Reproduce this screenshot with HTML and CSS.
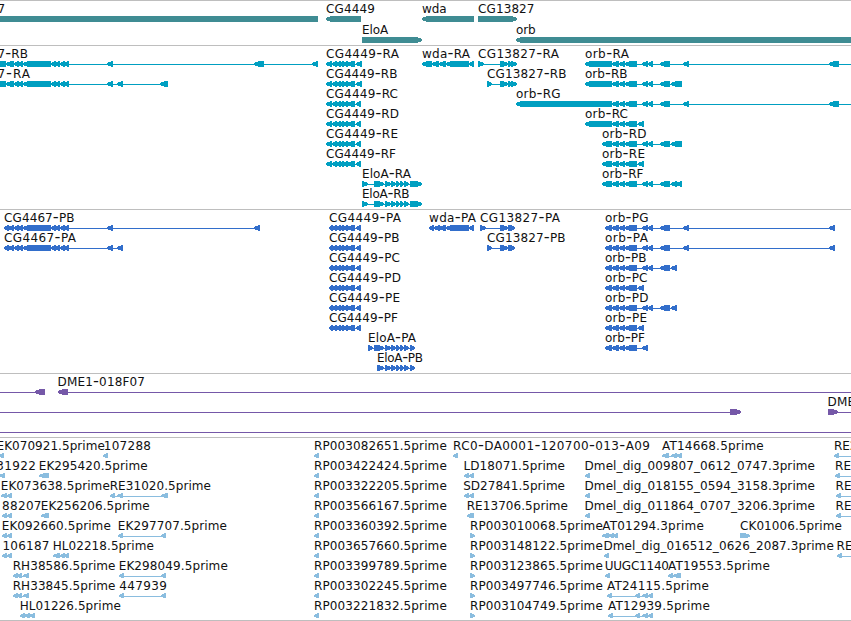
FILE: index.html
```
<!DOCTYPE html>
<html lang="en">
<head>
<meta charset="utf-8">
<title>Genome browser</title>
<link rel="stylesheet" href="styles.css">
</head>
<body>
<main class="browser" id="browser"></main>
<script src="tracks.js"></script>
</body>
</html>
```
FILE: styles.css
```
body {
  margin: 0;
  background: #fff;
}

.browser {
  display: flex;
  flex-direction: column;
  width: 851px;
  height: 620px;
  overflow: hidden;
  border-bottom: 1px solid #bebebe;
}

.track {
  box-sizing: border-box;
  flex: none;
  border-top: 1px solid #bebebe;
}

.track-genes { height: 45px; color: #3f8c93; }
.track-transcripts { height: 164px; color: #009fc1; }
.track-proteins { height: 164px; color: #326ecb; }
.track-clones { height: 64px; color: #7558a8; }
.track-ests { height: 183px; color: #8abddf; }

.row {
  display: block;
  width: 851px;
  height: 20px;
  overflow: visible;
}

.track-genes .row { height: 21px; }

.feature {
  fill: currentColor;
  shape-rendering: crispEdges;
}

.label {
  fill: #111;
  font: 12px "DejaVu Sans", sans-serif;
}

.hyphen { font-size: 16.5px; }
```
FILE: tracks.js
```
// Each feature: [label, labelStart, labelEnd, strand, exons, lineStart, lineEnd].
// Exons are "start-end" pairs in canvas pixels, separated by blanks.
const CG67 = "14-19 18-23 23-51 51-56 55-60 60-65 64-69 107-113";
const CG49R = "326-332 332-337 336-341 340-344 343-348 347-355 356-";
const CG49P = "329-333 332-337 336-341 340-344 343-348 347-355 356-361";
const ELO = "374-384 385-391 391-396 396-400 400-404 404-409";
const ORB = "612-619 619-625 625-637";
const ORB2 = ORB + " 642-648 648-653 660-670";

const rp = n => ["RP" + n + ".5prime", 314, 446.8, "-", "314-319"];
const rpR = n => ["RP" + n + ".5prime", 470, 602.8, "+", "470-475"];

const tracks = [
  { kind: "genes", rows: [
    [["7", -2.5, 5.5, "-", "-20-318"],
     ["CG4449", 326, 375, "-", "326-361"],
     ["wda", 422, 446.5, "-", "422-474"],
     ["CG13827", 478, 534.5, "+", "478-517"]],
    [["EloA", 362, 388.3, "+", "362-422"],
     ["orb", 516, 535.5, "-", "516-870"]]
  ]},
  { kind: "transcripts", rows: [
    [["7-RB", -2.5, 28, "-", "-10-6 6-14 " + CG67 + " 254-264 312-318"],
     ["CG4449-RA", 326, 399, "-", CG49R + "362"],
     ["wda-RA", 422, 470, "-", "422-432 432-439 439-446 446-469 469-474"],
     ["CG13827-RA", 478, 559, "+", "478-484 500-508 508-512 511-517"],
     ["orb-RA", 585, 629, "-", "585-612 " + ORB2 + " 683-689 829-839", 585, 851]],
    [["7-RA", -2.5, 30, "-", "-10-6 6-14 " + CG67 + " 117-123 160-168"],
     ["CG4449-RB", 326, 397.5, "-", CG49R + "362"],
     ["CG13827-RB", 487, 566.5, "+", "487-492 500-508 508-512 511-517"],
     ["orb-RB", 585, 627.5, "-", "585-612 " + ORB2 + " 671-682"]],
    [["CG4449-RC", 326, 398, "-", CG49R + "361"],
     ["orb-RG", 516, 560.5, "-", "516-612 " + ORB2 + " 683-689 829-839", 516, 851]],
    [["CG4449-RD", 326, 399, "-", CG49R + "361"],
     ["orb-RC", 585, 628, "-", "585-612 " + ORB + " 638-644"]],
    [["CG4449-RE", 326, 398, "-", CG49R + "361"],
     ["orb-RD", 602, 646.5, "-", "602-612 " + ORB2 + " 671-682"]],
    [["CG4449-RF", 326, 396, "-", CG49R + "361"],
     ["orb-RE", 602, 645, "-", "602-612 " + ORB + " 638-644"]],
    [["EloA-RA", 362, 411, "+", "362-368 " + ELO + " 410-422"],
     ["orb-RF", 602, 643.5, "-", "602-612 " + ORB2 + " 671-677 676-682"]],
    [["EloA-RB", 362, 409.5, "+", "362-368 " + ELO + " 410-422"]]
  ]},
  { kind: "proteins", rows: [
    [["CG4467-PB", 4, 74.5, "-", "4-9 8-14 " + CG67 + " 254-260"],
     ["CG4449-PA", 329, 401, "-", CG49P],
     ["wda-PA", 429, 476, "-", "429-434 434-440 439-446 446-469 469-474"],
     ["CG13827-PA", 480, 560, "+", "480-486 500-508 508-512 510-515"],
     ["orb-PG", 605, 648.5, "-", "605-612 " + ORB2 + " 683-689 829-835"]],
    [["CG4467-PA", 4, 76, "-", "4-9 8-14 " + CG67 + " 117-123"],
     ["CG4449-PB", 329, 399.5, "-", CG49P],
     ["CG13827-PB", 487, 565.5, "+", "487-492 500-508 508-512 510-515"],
     ["orb-PA", 605, 648, "-", "605-612 " + ORB2 + " 683-689 829-835"]],
    [["CG4449-PC", 329, 400, "-", CG49P],
     ["orb-PB", 605, 646.5, "-", "605-612 " + ORB2 + " 671-677"]],
    [["CG4449-PD", 329, 401, "-", CG49P],
     ["orb-PC", 605, 647.5, "-", "605-612 " + ORB + " 638-644"]],
    [["CG4449-PE", 329, 400, "-", CG49P],
     ["orb-PD", 605, 648.5, "-", "605-612 " + ORB2 + " 671-677"]],
    [["CG4449-PF", 329, 398, "-", CG49P],
     ["orb-PE", 605, 647, "-", "605-612 " + ORB + " 638-644"]],
    [["EloA-PA", 368, 416, "+", "368-373 " + ELO + " 410-415"],
     ["orb-PF", 605, 645, "-", "605-612 " + ORB + " 642-648"]],
    [["EloA-PB", 377, 423, "+", "377-384 " + ELO.slice(8) + " 410-415"]]
  ]},
  { kind: "clones", rows: [
    [["", 0, 0, "-", "35-45", 0, 45],
     ["DME1-018F07", 57.5, 145, "-", "58-68", 58, 851]],
    [["", 0, 0, "+", "730-741", 0, 741],
     ["DME", 827.5, 855, "+", "828-838", 828, 851]],
    [["", 0, 0, "+", "", 0, 851]]
  ]},
  { kind: "ests", bottom: 20, rows: [
    [["EK070921.5prime", -3.5, 104.8, "-", "-2-4"],
     ["107288", 103.7, 151, "-", "103-108"],
     rp("003082651"),
     ["RC0-DA0001-120700-013-A09", 453, 650, "-", "453-458"],
     ["AT14668.5prime", 662, 763.7, "-", "662-669 671-677 676-682"],
     ["RE2", 834, 857.5, "-", "834-839", 834, 851]],
    [["31922", -3.7, 36, "-", "-1-5"],
     ["EK295420.5prime", 38.7, 147.7, "-", "39-49"],
     rp("003422424"),
     ["LD18071.5prime", 463.5, 565, "-", "464-469 469-474"],
     ["Dmel_dig_009807_0612_0747.3prime", 584.5, 815, "-", "585-590"],
     ["RE", 835, 851, "-", "835-840", 835, 851]],
    [["EK073638.5prime", 0.7, 109.8, "-", "1-7 7-12"],
     ["RE31020.5prime", 109.7, 211, "-", "110-115 117-123 161-168"],
     rp("003322205"),
     ["SD27841.5prime", 463.2, 565, "-", "464-469 469-474"],
     ["Dmel_dig_018155_0594_3158.3prime", 584.5, 815, "-", "585-590"],
     ["RE", 835.5, 851.5, "-", "836-841", 836, 851]],
    [["88207", 2, 41.5, "-", "2-7 7-12"],
     ["EK256206.5prime", 40.7, 149.7, "-", "41-49"],
     rp("003566167"),
     ["RE13706.5prime", 466.7, 568, "-", "467-472 470-474"],
     ["Dmel_dig_011864_0707_3206.3prime", 584.5, 815, "-", "585-590"],
     ["RE", 835.5, 851.5, "-", "836-841", 836, 851]],
    [["EK092660.5prime", 1.7, 110.8, "-", "2-7 7-12"],
     ["EK297707.5prime", 117.7, 227, "-", "118-123 161-166"],
     rp("003360392"), rpR("003010068"),
     ["AT01294.3prime", 602.3, 703.8, "-", "602-609 608-614 613-618"],
     ["CK01006.5prime", 740, 841.8, "+", "740-750"]],
    [["106187", 2.5, 49.5, "-", "2-7 7-12"],
     ["HL02218.5prime", 52.7, 153.8, "-", "53-60 60-65 64-69"],
     rp("003657660"), rpR("003148122"),
     ["Dmel_dig_016512_0626_2087.3prime", 603.5, 833.8, "-", "604-609"],
     ["RE", 836.5, 852.5, "-", "837-842", 837, 851]],
    [["RH38586.5prime", 12.7, 115.5, "-", "13-18 17-22 23-29"],
     ["EK298049.5prime", 118.7, 227.8, "-", "119-124 161-166"],
     rp("003399789"), rpR("003123865"),
     ["UUGC1140", 604.7, 669, "-", "605-610"],
     ["AT19553.5prime", 668, 769.8, "-", "668-673 673-681"]],
    [["RH33845.5prime", 12.7, 115.5, "-", "13-18 17-22 23-29"],
     ["447939", 119.2, 167, "-", "119-124 161-166"],
     rp("003302245"), rpR("003497746"),
     ["AT24115.5prime", 607, 708.8, "-", "607-612 635-640 642-648 648-653"]],
    [["HL01226.5prime", 19.7, 120.8, "-", "20-25 24-30 29-35"],
     rp("003221832"), rpR("003104749"),
     ["AT12939.5prime", 608, 709.8, "-", "608-613 635-640 642-648 648-653"]]
  ]}
];

const SVG = "http://www.w3.org/2000/svg";
function add(parent, name, attrs) {
  const node = document.createElementNS(SVG, name);
  for (const key in attrs) node.setAttribute(key, attrs[key]);
  return parent.appendChild(node);
}

function arrow(x1, x2, strand, bottom) {
  const top = 15, mid = 18;
  const head = Math.min(5, x2 - x1 - 1);
  const [tip, tail, dir] = strand === "-" ? [x1, x2, 1] : [x2, x1, -1];
  const neck = tip + dir * head;
  return `${tip},${mid + 1} ${tip},${mid - 1} ${neck},${top} ${tail},${top} ${tail},${bottom} ${neck},${bottom}`;
}

// Hyphens are drawn as wide dashes.
function addLabel(svg, label, start, end) {
  const text = add(svg, "text", { class: "label", x: start, y: 12, textLength: end - start });
  for (const part of label.split(/(-)/)) {
    if (part === "-") add(text, "tspan", { class: "hyphen" }).textContent = part;
    else text.append(part);
  }
}

for (const track of tracks) {
  const section = document.createElement("section");
  section.className = "track track-" + track.kind;
  for (const row of track.rows) {
    const svg = add(section, "svg", { class: "row" });
    for (const [label, start, end, strand, exons, from, to] of row) {
      const spans = [...exons.matchAll(/(-?\d+)-(\d+)/g)].map(m => [+m[1], +m[2]]);
      const a = from ?? spans[0][0];
      const b = to ?? spans[spans.length - 1][1];
      add(svg, "rect", { class: "feature", x: a, y: 18, width: b - a, height: 1 });
      for (const [x1, x2] of spans) {
        add(svg, "polygon", { class: "feature", points: arrow(x1, x2, strand, track.bottom ?? 21) });
      }
      if (label) addLabel(svg, label, start, end);
    }
  }
  document.getElementById("browser").append(section);
}
```
